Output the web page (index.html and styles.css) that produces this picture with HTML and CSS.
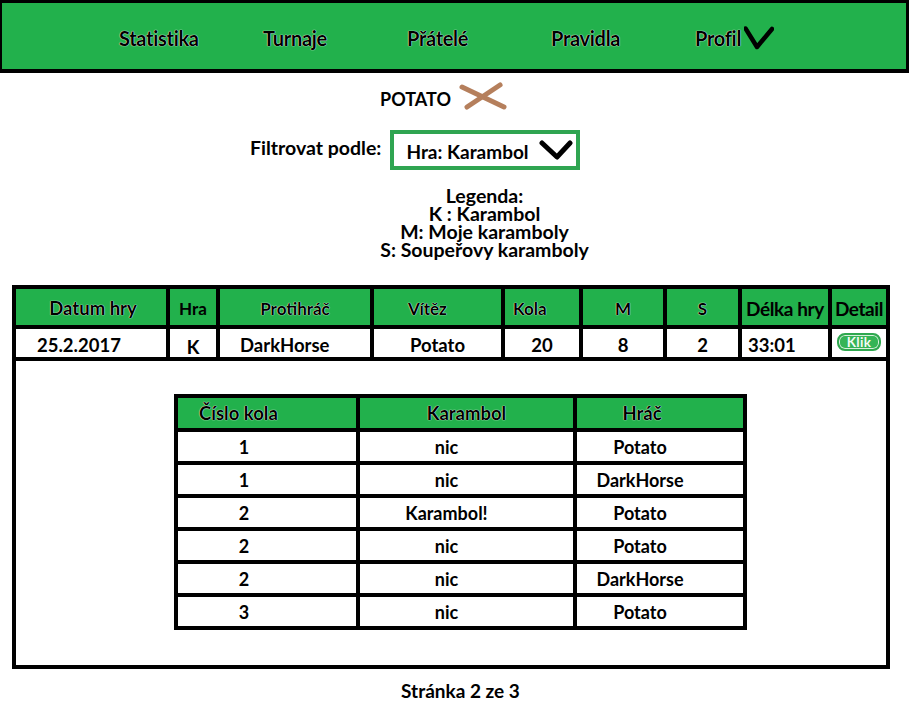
FILE: index.html
```html
<!DOCTYPE html>
<html lang="cs">
<head>
<meta charset="utf-8">
<title>Statistika</title>
<link rel="stylesheet" href="styles.css">
</head>
<body>
<nav class="nav">
  <a class="nav-item">Statistika</a>
  <a class="nav-item">Turnaje</a>
  <a class="nav-item">Přátelé</a>
  <a class="nav-item">Pravidla</a>
  <a class="nav-item nav-profile">Profil<svg class="nav-chev" width="30" height="24" viewBox="0 0 30 24"><polyline points="1.5,2.5 13,21 28,3" fill="none" stroke="#000" stroke-width="4.5" stroke-linecap="round" stroke-linejoin="round"/></svg></a>
</nav>

<div class="user-row">
  <span class="user-name">POTATO</span>
  <svg class="user-x" width="50" height="30" viewBox="0 0 50 30"><line x1="5" y1="5" x2="47" y2="25" stroke="#b57f5c" stroke-width="5" stroke-linecap="round"/><line x1="10" y1="25" x2="43" y2="3" stroke="#b57f5c" stroke-width="5" stroke-linecap="round"/></svg>
</div>

<div class="filter-row">
  <span class="filter-label">Filtrovat podle:</span>
  <div class="select">
    <span>Hra: Karambol</span>
    <svg class="select-chev" width="34" height="22" viewBox="0 0 34 22"><polyline points="3,4 18,18 31,4" fill="none" stroke="#000" stroke-width="5" stroke-linecap="round" stroke-linejoin="round"/></svg>
  </div>
</div>

<div class="legend">
  <div>Legenda:</div>
  <div>K : Karambol</div>
  <div>M: Moje karamboly</div>
  <div>S: Soupeřovy karamboly</div>
</div>

<section class="games">
  <div class="games-grid">
    <div class="gh gh-big">Datum hry</div>
    <div class="gh gh-hra">Hra</div>
    <div class="gh">Protihráč</div>
    <div class="gh gh-vitez">Vítěz</div>
    <div class="gh gh-left">Kola</div>
    <div class="gh">M</div>
    <div class="gh">S</div>
    <div class="gh gh-plain">Délka hry</div>
    <div class="gh gh-plain">Detail</div>

    <div class="gd gd-date">25.2.2017</div>
    <div class="gd gd-low">K</div>
    <div class="gd gd-opp">DarkHorse</div>
    <div class="gd">Potato</div>
    <div class="gd">20</div>
    <div class="gd">8</div>
    <div class="gd">2</div>
    <div class="gd gd-time">33:01</div>
    <div class="gd gd-detail"><span class="klik">Klik</span></div>
  </div>

  <div class="detail">
    <div class="rounds">
      <div class="rh rh-left">Číslo kola</div>
      <div class="rh">Karambol</div>
      <div class="rh rh-player">Hráč</div>

      <div class="rd">1</div><div class="rd">nic</div><div class="rd">Potato</div>
      <div class="rd">1</div><div class="rd">nic</div><div class="rd">DarkHorse</div>
      <div class="rd">2</div><div class="rd">Karambol!</div><div class="rd">Potato</div>
      <div class="rd">2</div><div class="rd">nic</div><div class="rd">Potato</div>
      <div class="rd">2</div><div class="rd">nic</div><div class="rd">DarkHorse</div>
      <div class="rd">3</div><div class="rd">nic</div><div class="rd">Potato</div>
    </div>
  </div>
</section>

<div class="pager">Stránka 2 ze 3</div>
</body>
</html>
```

FILE: styles.css
```css
* { box-sizing: border-box; }

body {
  margin: 0;
  background: #fff;
  color: #000;
  font-family: "Lato", "Liberation Sans", sans-serif;
  font-weight: 700;
  font-size: 19px;
}

.nav {
  height: 73px;
  background: #22b14c;
  border-style: solid;
  border-color: #000;
  border-width: 3px 3px 4px 2px;
  display: grid;
  grid-template-columns: repeat(5, 144px);
  align-items: center;
  padding: 4px 0 0 117px;
}

.nav-item {
  font-size: 20px;
  letter-spacing: -0.3px;
  color: #000;
  text-shadow: 0 0 1px #fff, 0 0 1px #fff;
  display: flex;
  align-items: center;
}

.nav-chev {
  margin-left: 3px;
}

.user-row {
  margin-top: 9px;
  height: 30px;
  display: flex;
  align-items: center;
  justify-content: center;
  padding-right: 22px;
  gap: 6px;
}

.user-name {
  font-size: 18px;
  padding-top: 3px;
}

.filter-row {
  margin-top: 18px;
  display: flex;
  align-items: center;
  padding-left: 250px;
  gap: 9px;
}

.filter-label {
  font-size: 19.5px;
  margin-top: -6px;
}

.select {
  width: 190px;
  height: 40px;
  border: 4px solid #2fa551;
  display: flex;
  align-items: center;
  padding: 3px 0 0 12px;
  gap: 10px;
  font-size: 19px;
}

.select-chev { margin-top: -4px; }

.legend {
  margin-top: 17px;
  text-align: center;
  padding-left: 60px;
  line-height: 18px;
  font-size: 19.5px;
}

.games {
  margin: 26px 0 0 12px;
  width: 878px;
  border: 4px solid #000;
}

.games-grid {
  display: grid;
  grid-template-columns: 150px 46px 150px 127px 74px 80px 71px 86px 54px;
  grid-template-rows: 36px 28px;
  gap: 4px;
  background: #000;
  border-bottom: 4px solid #000;
}

.gh {
  background: #22b14c;
  display: flex;
  align-items: center;
  justify-content: center;
  font-size: 17px;
  padding-top: 2px;
  text-shadow: 0 0 1px #fff, 0 0 1px #fff;
  white-space: nowrap;
}

.gh-big { font-size: 18.5px; padding-left: 4px; }
.gh-vitez { padding-right: 20px; }
.gh-left { justify-content: flex-start; padding-left: 8px; }
.gh-hra { text-shadow: none; }
.gh-plain { text-shadow: none; font-size: 19px; letter-spacing: -0.4px; }

.gd {
  background: #fff;
  display: flex;
  align-items: center;
  justify-content: center;
  padding-top: 4px;
  font-size: 18.5px;
}

.gd-date { justify-content: flex-start; padding-left: 21px; }
.gd-opp { justify-content: flex-start; padding-left: 20px; }
.gd-time { justify-content: flex-start; padding-left: 6px; }
.gd-low { padding-top: 8px; }
.gd-detail { align-items: flex-start; padding-top: 4px; }

.klik {
  width: 44px;
  height: 18px;
  border-radius: 8px;
  background: #35b456;
  border: 2px solid #2fa84f;
  box-shadow: inset 0 0 0 1px #d8f0dd;
  color: #f2fbf4;
  font-size: 13.5px;
  display: flex;
  align-items: center;
  justify-content: center;
  letter-spacing: 0.3px;
}

.detail {
  height: 304px;
  padding: 33px 0 0 158px;
}

.rounds {
  width: 573px;
  display: grid;
  grid-template-columns: 178px 213px 166px;
  grid-template-rows: 30px repeat(6, 29px);
  gap: 4px;
  border: 4px solid #000;
  background: #000;
}

.rh {
  background: #22b14c;
  display: flex;
  align-items: center;
  justify-content: center;
  font-size: 18.5px;
  text-shadow: 0 0 1px #fff, 0 0 1px #fff;
}

.rh-left { justify-content: flex-start; padding-left: 21px; }
.rh-player { padding-right: 36px; }

.rd {
  background: #fff;
  display: flex;
  align-items: center;
  justify-content: center;
  padding-right: 40px;
  font-size: 18px;
}

.rd:nth-child(3n+1) { padding-right: 46px; }

.pager {
  margin-top: 10px;
  text-align: center;
  padding-left: 12px;
  font-size: 19px;
}
```
